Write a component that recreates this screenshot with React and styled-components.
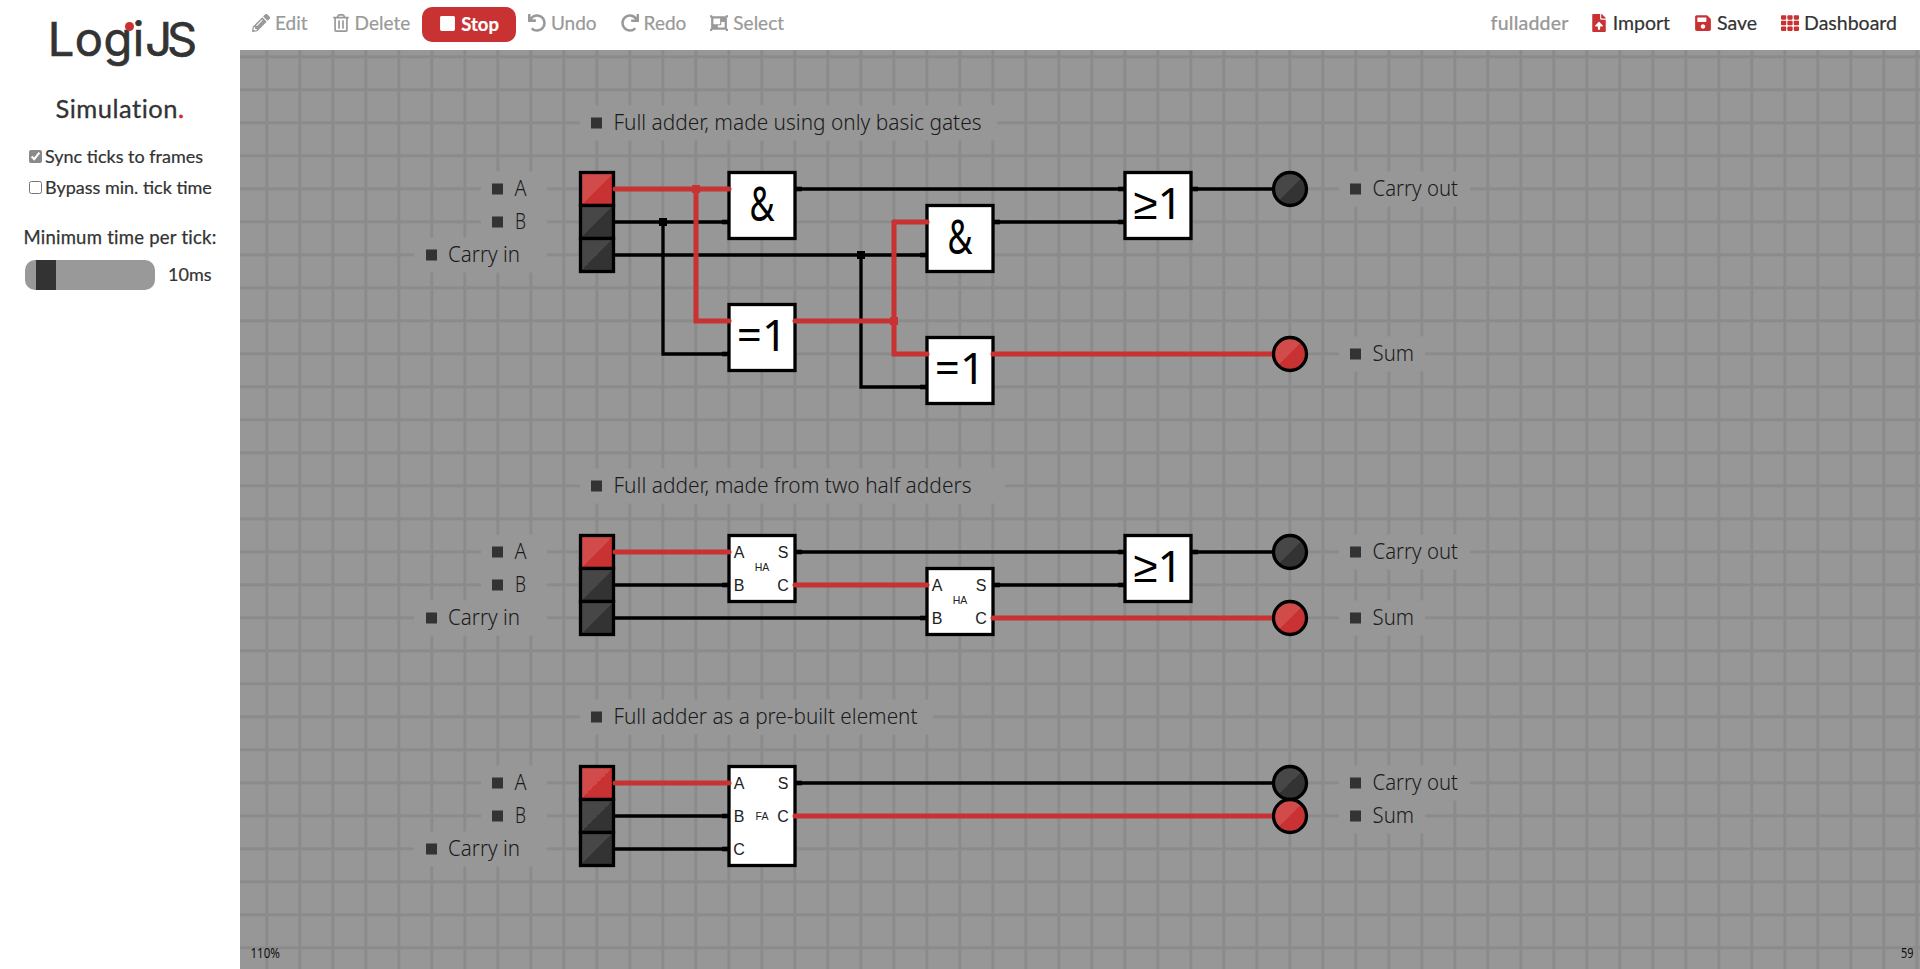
import React from 'react';
import styled, { createGlobalStyle } from 'styled-components';
import { FaPencilAlt, FaRegTrashAlt, FaStop, FaUndo, FaRedo, FaObjectGroup, FaFileUpload, FaSave, FaTh } from 'react-icons/fa';

const Global = createGlobalStyle`
  html, body { margin: 0; padding: 0; height: 100%; background: #fff; }
  body { font-family: Lato, "Noto Sans", sans-serif; color: #333; overflow: hidden; }
`;
const Page = styled.div`display: flex; width: 1920px; height: 969px;`;
const Sidebar = styled.aside`
  width: 240px; flex: none; display: flex; flex-direction: column; align-items: center; background: #fff;
`;
const Logo = styled.div`
  position: relative; margin-top: 8px; height: 62px; font-family: Inter, Lato, sans-serif; font-size: 47px; line-height: 62px; font-weight: 400; color: #333; -webkit-text-stroke: 0.7px #333;
`;
const LogoPart = styled.span`letter-spacing: ${p => p.$spacing}px;`;
const LogoDot = styled.span`
  position: absolute; left: 77.5px; top: 13.5px; width: 9px; height: 9px; border-radius: 50%; background: #c83232;
`;
const Heading = styled.h2`
  margin: 20px 0 0; height: 36px; font-size: 25.5px; line-height: 36px; font-weight: 400; color: #333; letter-spacing: 0.5px; -webkit-text-stroke: 0.3px #333;
`;
const Dot = styled.span`color: #c83232; -webkit-text-stroke: 0.6px #c83232;`;
const Options = styled.div`
  align-self: stretch; margin-top: 20px; padding-left: 29px; display: flex; flex-direction: column; gap: 11px;
`;
const Option = styled.label`
  display: flex; align-items: center; gap: 3px; height: 20px; font-size: 18px; color: #333; -webkit-text-stroke: 0.2px #333;
`;
const Check = styled.input`
  appearance: auto; width: 13px; height: 13px; margin: 0; accent-color: #8a8a8a;
`;
const SliderTitle = styled.div`
  margin-top: 28px; height: 24px; line-height: 24px; font-size: 18.5px; letter-spacing: 0.25px; color: #333; -webkit-text-stroke: 0.25px #333;
`;
const SliderRow = styled.div`
  align-self: stretch; margin-top: 11px; padding-left: 25px; display: flex; align-items: center; gap: 13px;
`;
const Track = styled.div`
  position: relative; width: 130px; height: 30px; border-radius: 10px; background: #999;
`;
const Thumb = styled.div`
  position: absolute; left: 11px; top: 0; width: 20px; height: 30px; background: #333;
`;
const SliderValue = styled.span`padding-bottom: 2px; font-size: 18px; color: #333; -webkit-text-stroke: 0.2px #333;`;
const Main = styled.main`flex: 1; min-width: 0; display: flex; flex-direction: column;`;
const Toolbar = styled.header`
  flex: none; box-sizing: border-box; height: 50px; padding-bottom: 1px; display: flex; align-items: center; justify-content: space-between; padding-right: 11px; background: #fff;
`;
const Group = styled.div`display: flex; align-items: center;`;
const Tool = styled.button`
  border: 0; background: none; padding: 0 12px 4px; height: 35px; display: flex; align-items: center; gap: 5px;
  font: 400 19px Lato, "Noto Sans", sans-serif; -webkit-text-stroke: 0.2px currentColor; color: #999;
  svg { font-size: 18px; color: #999; }
`;
const LinkTool = styled(Tool)`
  font-size: 19.5px; color: #333;
  svg { color: #c83232; }
`;
const StopTool = styled(Tool)`
  padding: 0 17px 2px 17px; border-radius: 10px; background: #c83232; color: #fff; font-size: 18.5px; font-weight: 700;
  svg { color: #fff; font-size: 17px; }
`;
const ProjectName = styled.span`
  padding-bottom: 4px; font-size: 19.5px; font-weight: 500; color: #999; margin-right: 9px; letter-spacing: 0.2px; -webkit-text-stroke: 0.2px #999;
`;
const Canvas = styled.section`
  flex: 1; position: relative; overflow: hidden;
  background-color: #979797;
  background-image:
    linear-gradient(to right, #8b8b8b 3.3px, transparent 3.3px),
    linear-gradient(to bottom, #8b8b8b 3.3px, transparent 3.3px);
  background-size: 33px 33px;
  background-position: 25.35px 5.35px;
`;
const Diagram = styled.svg`display: block; width: 1680px; height: 919px;`;
const Mask = styled.rect`fill: #979797;`;
const Bullet = styled.rect`fill: #333;`;
const LabelText = styled.text`
  font-family: "Noto Sans", sans-serif; font-size: 21px; font-weight: 300; fill: #1a1a1a; dominant-baseline: central;
`;
const Wire = styled.path`
  fill: none; stroke: ${p => (p.$on ? '#c83232' : '#000')}; stroke-width: ${p => (p.$on ? 5 : 3.3)}px; stroke-linejoin: miter;
  stroke-linecap: ${p => (p.$on ? 'round' : 'butt')};
`;
const Stub = styled.path`fill: none; stroke: #000; stroke-width: 4.6px;`;
const Joint = styled.rect`fill: ${p => (p.$on ? '#c83232' : '#000')};`;
const GateBox = styled.rect`fill: #fff; stroke: #000; stroke-width: 3.3px;`;
const GateSign = styled.text`
  font-family: "Noto Sans", sans-serif; font-size: ${p => p.$size || 44}px; fill: #000; text-anchor: middle; dominant-baseline: central;
`;
const PinText = styled.text`
  font-family: "Liberation Sans", Arial, sans-serif; font-size: 16px; fill: #222; text-anchor: middle; dominant-baseline: central;
`;
const CoreText = styled(PinText)`font-size: 10.5px;`;
const Cell = styled.rect`fill: url(#${p => (p.$on ? 'fillOn' : 'fillOff')}); stroke: #000; stroke-width: 3.3px;`;
const Lamp = styled.circle`fill: url(#${p => (p.$on ? 'fillOn' : 'fillOff')}); stroke: #000; stroke-width: 3.3px;`;
const Corner = styled.text`font-family: "Noto Sans", sans-serif; font-size: 13.5px; fill: #111; dominant-baseline: central;`;

function Label({ text, x, y, tx, len, mx0, mx1 }) {
  return (
    <g>
      <Mask x={mx0} y={y - 17.5} width={mx1 - mx0} height={35} />
      <Bullet x={x} y={y - 5.5} width={11} height={11} />
      <LabelText x={tx} y={y - 1} textLength={len} lengthAdjust="spacingAndGlyphs">{text}</LabelText>
    </g>
  );
}

function Inputs({ y, on }) {
  return [0, 1, 2].map(i => (
    <Cell key={i} x={580.5} y={y + i * 33 - 16.5} width={33} height={33} $on={on === i} />
  ));
}

function Gate({ x, y, sign, size, narrow }) {
  return (
    <g>
      <GateBox x={x} y={y - 16.5} width={66} height={66} />
      <GateSign x={x + 33} y={y + 13} $size={size} textLength={narrow} lengthAdjust={narrow ? 'spacingAndGlyphs' : undefined}>{sign}</GateSign>
    </g>
  );
}

function Adder({ x, y, core, three }) {
  const pins = [['A', x + 10, y], ['S', x + 54, y], ['B', x + 10, y + 33], ['C', x + 54, y + 33]];
  if (three) pins.push(['C', x + 10, y + 66]);
  return (
    <g>
      <GateBox x={x} y={y - 16.5} width={66} height={(three ? 3 : 2) * 33} />
      {pins.map(([t, px, py], i) => <PinText key={i} x={px} y={py}>{t}</PinText>)}
      <CoreText x={x + 33} y={three ? y + 33 : y + 15}>{core}</CoreText>
    </g>
  );
}

const wires = [
  ['M615 222H729', 0], ['M663 222V354H729', 0], ['M615 255H927', 0], ['M861 255V387H927', 0],
  ['M795 189H1125', 0], ['M993 222H1125', 0], ['M1191 189H1290', 0],
  ['M615 189H729', 1], ['M696 189V321H729', 1], ['M795 321H894', 1], ['M894 222H927', 1], ['M894 222V354H927', 1], ['M993 354H1290', 1],
  ['M615 585H729', 0], ['M615 618H927', 0], ['M795 552H1125', 0], ['M993 585H1125', 0], ['M1191 552H1290', 0],
  ['M615 552H729', 1], ['M795 585H927', 1], ['M993 618H1290', 1],
  ['M615 816H729', 0], ['M615 849H729', 0], ['M795 783H1290', 0],
  ['M615 783H729', 1], ['M795 816H1290', 1],
];
const stubs = [
  'M722 222H729', 'M722 354H729', 'M920 255H927', 'M920 387H927', 'M795 189H802', 'M993 222H1000', 'M1118 189H1125', 'M1118 222H1125', 'M1191 189H1198',
  'M722 585H729', 'M920 618H927', 'M795 552H802', 'M993 585H1000', 'M1118 552H1125', 'M1118 585H1125', 'M1191 552H1198',
  'M722 816H729', 'M722 849H729', 'M795 783H802',
];
const joints = [[663, 222, 0], [861, 255, 0], [696, 189, 1], [894, 321, 1]];
const lamps = [[189, 0], [354, 1], [552, 0], [618, 1], [783, 0], [816, 1]];

function LeftLabels({ y }) {
  return (
    <>
      <Label text="A" x={492} y={y} tx={514.5} len={12} mx0={481} mx1={547} />
      <Label text="B" x={492} y={y + 33} tx={515} len={11} mx0={481} mx1={547} />
      <Label text="Carry in" x={426} y={y + 66} tx={448} len={72} mx0={414} mx1={547} />
    </>
  );
}

function Circuit() {
  return (
    <Diagram viewBox="240 50 1680 919">
      <defs>
        <linearGradient id="fillOn" x1="0" y1="0" x2="1" y2="1">
          <stop offset="0.5" stopColor="#d24b4b" /><stop offset="0.5" stopColor="#c83232" />
        </linearGradient>
        <linearGradient id="fillOff" x1="0" y1="0" x2="1" y2="1">
          <stop offset="0.5" stopColor="#474747" /><stop offset="0.5" stopColor="#333333" />
        </linearGradient>
      </defs>
      <Label text="Full adder, made using only basic gates" x={591} y={123} tx={613.5} len={368} mx0={580} mx1={997} />
      <Label text="Full adder, made from two half adders" x={591} y={486} tx={613.5} len={358} mx0={580} mx1={1005} />
      <Label text="Full adder as a pre-built element" x={591} y={717} tx={613.5} len={304} mx0={580} mx1={933} />
      <LeftLabels y={189} />
      <LeftLabels y={552} />
      <LeftLabels y={783} />
      <Label text="Carry out" x={1350} y={189} tx={1372.5} len={85.5} mx0={1339} mx1={1470} />
      <Label text="Sum" x={1350} y={354} tx={1372.5} len={41.5} mx0={1339} mx1={1425} />
      <Label text="Carry out" x={1350} y={552} tx={1372.5} len={85.5} mx0={1339} mx1={1470} />
      <Label text="Sum" x={1350} y={618} tx={1372.5} len={41.5} mx0={1339} mx1={1425} />
      <Label text="Carry out" x={1350} y={783} tx={1372.5} len={85.5} mx0={1339} mx1={1470} />
      <Label text="Sum" x={1350} y={816} tx={1372.5} len={41.5} mx0={1339} mx1={1425} />

      <Inputs y={189} on={0} />
      <Inputs y={552} on={0} />
      <Inputs y={783} on={0} />

      <Gate x={729} y={189} sign="&" size={48} narrow={25} />
      <Gate x={927} y={222} sign="&" size={48} narrow={25} />
      <Gate x={729} y={321} sign="=1" />
      <Gate x={927} y={354} sign="=1" />
      <Gate x={1125} y={189} sign="≥1" />
      <Adder x={729} y={552} core="HA" />
      <Adder x={927} y={585} core="HA" />
      <Gate x={1125} y={552} sign="≥1" />
      <Adder x={729} y={783} core="FA" three />

      {wires.map(([d, on], i) => <Wire key={i} d={d} $on={!!on} />)}
      {stubs.map((d, i) => <Stub key={i} d={d} />)}
      {joints.map(([x, y, on], i) => <Joint key={i} x={x - 4} y={y - 4} width={8} height={8} $on={!!on} />)}
      {lamps.map(([y, on], i) => <Lamp key={i} cx={1290} cy={y} r={16.5} $on={!!on} />)}

      <Corner x={250.5} y={953} textLength={29.5} lengthAdjust="spacingAndGlyphs">110%</Corner>
      <Corner x={1901} y={953} textLength={12.5} lengthAdjust="spacingAndGlyphs">59</Corner>
    </Diagram>
  );
}

export default function App() {
  return (
    <Page>
      <Global />
      <Sidebar>
        <Logo><LogoPart $spacing={0.5}>Log</LogoPart><LogoPart $spacing={1}>i</LogoPart><LogoPart $spacing={-5}>JS</LogoPart><LogoDot /></Logo>
        <Heading>Simulation<Dot>.</Dot></Heading>
        <Options>
          <Option><Check type="checkbox" defaultChecked />Sync ticks to frames</Option>
          <Option><Check type="checkbox" />Bypass min. tick time</Option>
        </Options>
        <SliderTitle>Minimum time per tick:</SliderTitle>
        <SliderRow>
          <Track><Thumb /></Track>
          <SliderValue>10ms</SliderValue>
        </SliderRow>
      </Sidebar>
      <Main>
        <Toolbar>
          <Group>
            <Tool><FaPencilAlt />Edit</Tool>
            <Tool><FaRegTrashAlt />Delete</Tool>
            <StopTool><FaStop />Stop</StopTool>
            <Tool><FaUndo />Undo</Tool>
            <Tool><FaRedo />Redo</Tool>
            <Tool><FaObjectGroup />Select</Tool>
          </Group>
          <Group>
            <ProjectName>fulladder</ProjectName>
            <LinkTool><FaFileUpload />Import</LinkTool>
            <LinkTool><FaSave />Save</LinkTool>
            <LinkTool><FaTh />Dashboard</LinkTool>
          </Group>
        </Toolbar>
        <Canvas><Circuit /></Canvas>
      </Main>
    </Page>
  );
}
